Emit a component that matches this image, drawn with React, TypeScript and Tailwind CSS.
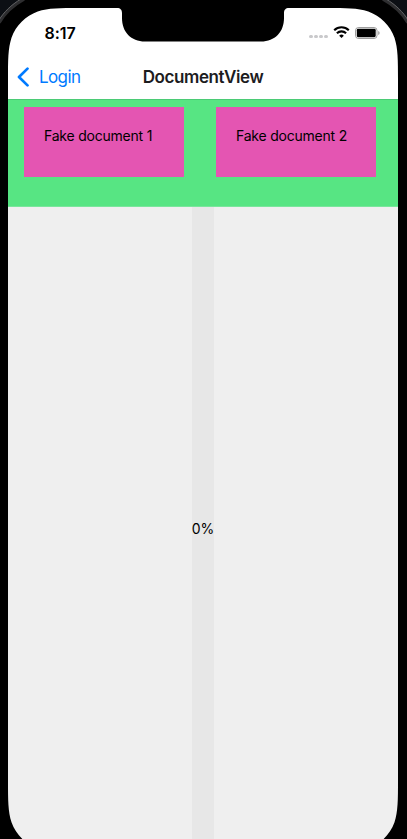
const documents = ["Fake document 1", "Fake document 2"];

function StatusBar() {
  return (
    <div className="flex h-[47px] items-start justify-between pl-[36.5px] pr-[17.5px] pt-4 text-black">
      <span className="text-[16px] leading-[18px] font-semibold tracking-[-0.05px]">8:17</span>
      <div className="flex h-[18px] items-center">
        <div className="mr-[5px] mt-[7px] flex gap-[1.6px]">
          <i className="size-[3.4px] rounded-full bg-[#c9c9cb]" />
          <i className="size-[3.4px] rounded-full bg-[#c9c9cb]" />
          <i className="size-[3.4px] rounded-full bg-[#c9c9cb]" />
          <i className="size-[3.4px] rounded-full bg-[#c9c9cb]" />
        </div>
        <svg className="mr-[5px] -mt-[2px] h-[12px] w-[17px]" viewBox="0 0 17 12" aria-hidden="true">
          <path
            d="M1.2 4.3a10.4 10.4 0 0 1 14.6 0M3.9 7.2a6.6 6.6 0 0 1 9.2 0"
            fill="none"
            stroke="#000"
            strokeWidth="2.1"
          />
          <path d="M8.5 12 6.2 9.7a3.3 3.3 0 0 1 4.6 0z" />
        </svg>
        <svg className="h-[12px] w-[26px]" viewBox="0 0 26 12" aria-hidden="true">
          <rect x=".5" y=".5" width="21.5" height="11" rx="3" fill="none" stroke="#000" strokeOpacity=".38" />
          <rect x="1.8" y="1.8" width="18.9" height="8.4" rx="1.4" />
          <path d="M23.3 4v4a2.2 2.2 0 0 0 0-4z" fillOpacity=".45" />
        </svg>
      </div>
    </div>
  );
}

function NavBar() {
  return (
    <div className="grid h-11 grid-cols-[1fr_auto_1fr] items-center text-[17px] leading-[22px]">
      <div className="flex items-center pl-[9px] text-[#007aff]">
        <svg className="h-[20px] w-[12px]" viewBox="0 0 12 20" fill="none" stroke="currentColor" aria-hidden="true">
          <path d="M10.5 1.6 2 10l8.5 8.4" strokeWidth="2.7" strokeLinecap="round" strokeLinejoin="round" />
        </svg>
        <span className="ml-[10px] tracking-[-0.6px]">Login</span>
      </div>
      <span className="font-semibold tracking-[-0.4px] text-[#1c1c1e]">DocumentView</span>
      <span />
    </div>
  );
}

function DeviceFrame() {
  return (
    <svg className="pointer-events-none absolute inset-0" width="407" height="839" viewBox="0 0 407 839" aria-hidden="true">
      <path
        fillRule="evenodd"
        d="M0 0H407V852H0ZM8 79.8V780.2C8 800.8 8 811.2 11.5 822.3C15.9 834.5 25.5 844.1 37.7 848.5C48.8 852 59.2 852 79.8 852H326.2C346.8 852 357.2 852 368.3 848.5C380.5 844.1 390.1 834.5 394.5 822.3C398 811.2 398 800.8 398 780.2V79.8C398 59.2 398 48.8 394.5 37.7C390.1 25.5 380.5 15.9 368.3 11.5C357.2 8 346.8 8 326.2 8H289C285.5 8 284 10 284 13V18C284 32 275 41.5 261 41.5H145C131 41.5 122 32 122 18V13C122 10 120.5 8 117 8H79.8C59.2 8 48.8 8 37.7 11.5C25.5 15.9 15.9 25.5 11.5 37.7C8 48.8 8 59.2 8 79.8Z"
      />
      <path d="M0 0H20C12 4 4 11 0 18ZM407 0H387C395 4 403 11 407 18Z" fill="#0c0f14" />
      <path d="M-1 22.5C4 14 13 5 24 -1M408 22.5C403 14 394 5 383 -1" fill="none" stroke="#2e2e30" strokeWidth="3.5" />
      <path d="M-1 20C4 12 11 5 21 -1M408 20C403 12 396 5 386 -1" fill="none" stroke="#606164" strokeWidth="1" />
    </svg>
  );
}

export default function App() {
  return (
    <div className="relative h-[839px] w-[407px] overflow-hidden bg-black font-[Inter,sans-serif]">
      <main className="ml-2 flex h-[839px] w-[390px] flex-col bg-[#efefef] pt-2">
        <header className="h-[91px] shrink-0 bg-white">
          <StatusBar />
          <NavBar />
        </header>
        <section className="flex h-[108px] shrink-0 gap-8 border-t border-t-[#4bcb75] border-b border-b-[#79e69c] bg-[#57e583] pl-4 pt-[7px]">
          {documents.map((name) => (
            <div key={name} className="h-[70px] w-40 bg-[#e455b2] p-5 text-[14px] leading-[17px] tracking-[-0.22px] text-black">
              {name}
            </div>
          ))}
        </section>
        <section className="flex flex-1 pl-[184px]">
          <div className="flex w-[22px] justify-center bg-[#e7e7e7] pt-[313px] text-[14px] leading-[17px] text-black">
            0%
          </div>
        </section>
      </main>
      <DeviceFrame />
    </div>
  );
}
